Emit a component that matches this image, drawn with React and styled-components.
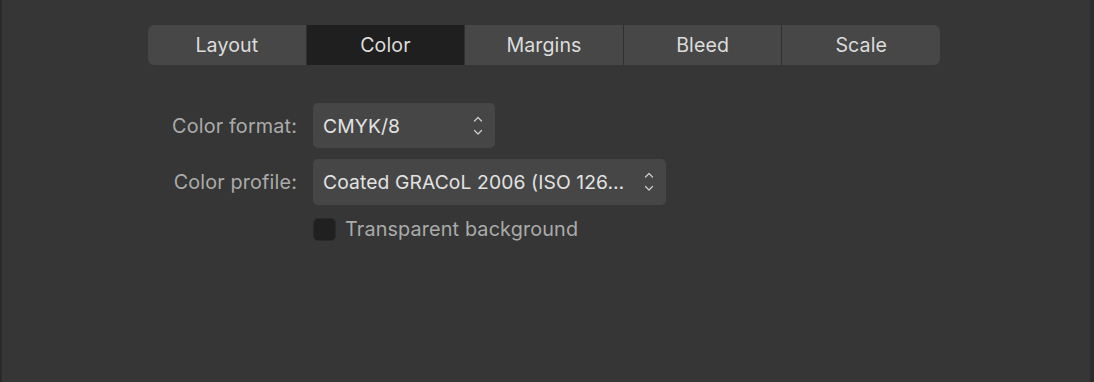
import React from "react";
import styled, { createGlobalStyle } from "styled-components";

const Global = createGlobalStyle`
  html, body { margin: 0; padding: 0; background: #363636; }
  body { font-family: Inter, "Noto Sans", "Liberation Sans", sans-serif; -webkit-font-smoothing: antialiased; }
`;

const Panel = styled.div`
  box-sizing: border-box;
  width: 1094px;
  height: 382px;
  background: #363636;
  border-left: 2px solid #2a2a2a;
  border-right: 4px solid #2c2c2c;
  padding: 25px 0 0 146px;
`;

const Tabs = styled.div`
  display: grid;
  grid-template-columns: repeat(5, 1fr);
  gap: 1px;
  width: 792px;
  height: 40px;
  background: #303030;
  border-radius: 6px;
  overflow: hidden;
`;

const Tab = styled.button`
  border: 0;
  margin: 0;
  padding: 0 0 1px;
  font: inherit;
  font-size: 19.6px;
  letter-spacing: 0.1px;
  color: #dcdcdc;
  background: ${(p) => (p.$active ? "#1f1f1f" : "#474747")};
  display: flex;
  align-items: center;
  justify-content: center;
`;

const Form = styled.div`
  display: grid;
  grid-template-columns: 149px auto;
  column-gap: 16px;
  row-gap: 11px;
  margin-top: 38px;
  align-items: center;
  justify-items: start;
`;

const Label = styled.div`
  justify-self: end;
  color: #ababab;
  font-size: 19.8px;
  letter-spacing: 0.15px;
  white-space: nowrap;
`;

const Select = styled.div`
  box-sizing: border-box;
  width: ${(p) => p.$w}px;
  height: ${(p) => p.$h}px;
  background: #464646;
  border-radius: 5px;
  display: flex;
  align-items: center;
  padding: 0 12px 0 10px;
  gap: 8px;
  color: #e2e2e2;
  font-size: 19.3px;
  letter-spacing: 0.1px;
`;

const SelectText = styled.span`
  flex: 1;
  white-space: nowrap;
  overflow: hidden;
`;

const Spacer = styled.div``;

const CheckRow = styled.label`
  display: flex;
  align-items: center;
  gap: 9px;
  color: #ababab;
  font-size: 19.8px;
  letter-spacing: 0.15px;
  margin-top: 1px;
`;

const Box = styled.span`
  width: 23px;
  height: 23px;
  box-sizing: border-box;
  border-radius: 5px;
  background: #202020;
  border: 1px solid #2a2a2a;
`;

const Chevrons = () => (
  <svg width="10" height="22" viewBox="0 0 10 22" fill="none" stroke="#cfcfcf" strokeWidth="1.2" strokeLinecap="round" strokeLinejoin="round">
    <path d="M1.5 6 L5 2.5 L8.5 6" />
    <path d="M1.5 15.5 L5 19 L8.5 15.5" />
  </svg>
);

export default function App() {
  const tabs = ["Layout", "Color", "Margins", "Bleed", "Scale"];
  return (
    <>
      <Global />
      <Panel>
        <Tabs>
          {tabs.map((t) => (
            <Tab key={t} $active={t === "Color"}>{t}</Tab>
          ))}
        </Tabs>
        <Form>
          <Label>Color format:</Label>
          <Select $w={182} $h={45}>
            <SelectText>CMYK/8</SelectText>
            <Chevrons />
          </Select>
          <Label>Color profile:</Label>
          <Select $w={353} $h={46}>
            <SelectText>Coated GRACoL 2006 (ISO 126…</SelectText>
            <Chevrons />
          </Select>
          <Spacer />
          <CheckRow>
            <Box />
            Transparent background
          </CheckRow>
        </Form>
      </Panel>
    </>
  );
}
